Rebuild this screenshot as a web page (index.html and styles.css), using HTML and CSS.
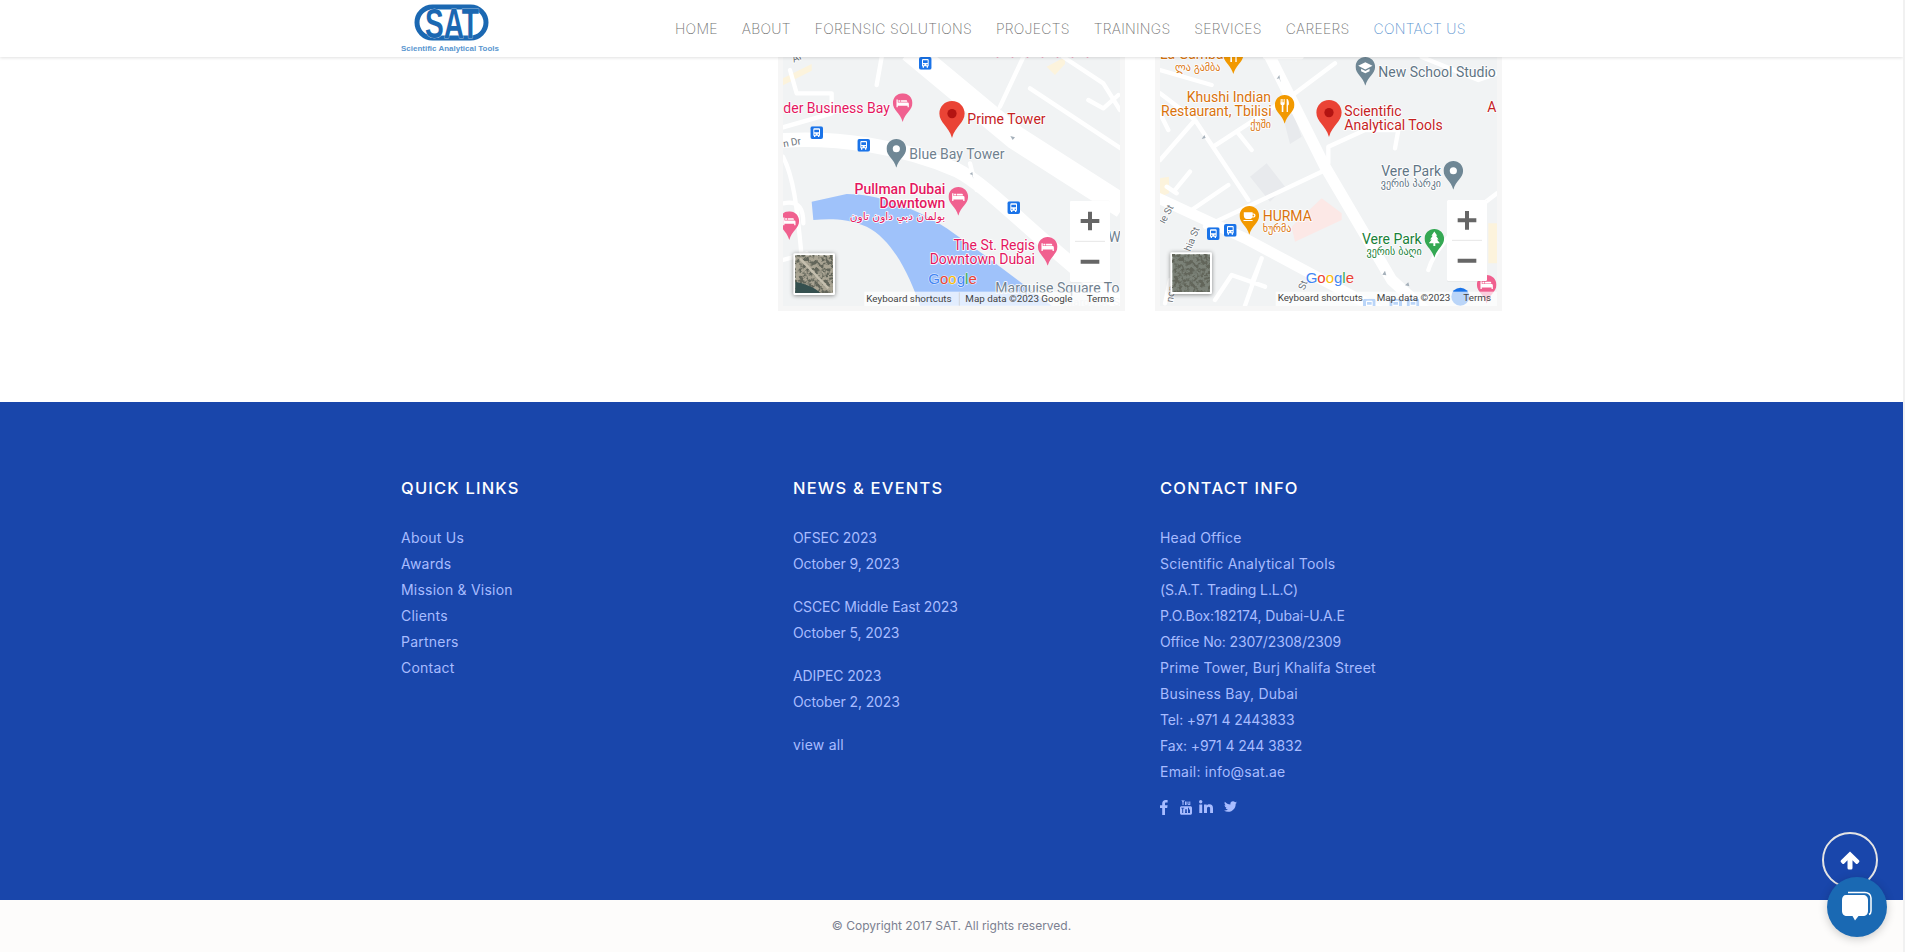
FILE: index.html
```html
<!DOCTYPE html>
<html lang="en">
<head>
<meta charset="utf-8">
<title>SAT - Contact Us</title>
<link rel="stylesheet" href="styles.css">
</head>
<body>
<header class="site-header">
  <a class="logo" href="#">
    <svg width="100" height="57" viewBox="0 0 100 57" aria-label="SAT logo">
      <rect class="logo-ring" x="16" y="7" width="69" height="31" rx="15.500"/>
      <text class="logo-mark" x="24" y="37.500" textLength="54" lengthAdjust="spacingAndGlyphs">SAT</text>
      <text class="logo-name" x="0" y="50.500" textLength="98" lengthAdjust="spacingAndGlyphs">Scientific Analytical Tools</text>
    </svg>
  </a>
  <nav class="main-nav">
    <a href="#">HOME</a>
    <a href="#">ABOUT</a>
    <a href="#">FORENSIC SOLUTIONS</a>
    <a href="#">PROJECTS</a>
    <a href="#">TRAININGS</a>
    <a href="#">SERVICES</a>
    <a href="#">CAREERS</a>
    <a href="#" class="current">CONTACT US</a>
  </nav>
</header>

<main class="maps-section">
  <div class="map-frame">
    <svg class="map" width="337" height="249" viewBox="39 21 1011 747">
      <defs>
        <path id="pin-shape" d="M30 0C13 0 0 13 0 30C0 52 22 60 30 88C38 60 60 52 60 30C60 13 47 0 30 0Z"/>
        <symbol id="pin-bed" viewBox="0 0 60 88"><use href="#pin-shape" fill="currentColor"/><path fill="#fff" d="M11 19h4v9h30a4 4 0 0 1 4 4v11h-4v-5H15v5h-4zM17 21h6v5h-6zM25 21h16a3 3 0 0 1 3 3v2H25z"/></symbol>
        <symbol id="pin-dot" viewBox="0 0 60 88"><use href="#pin-shape" fill="currentColor"/><circle cx="30" cy="30" r="11" fill="#fff"/></symbol>
        <symbol id="pin-red" viewBox="0 0 60 88"><use href="#pin-shape" fill="#ea4335"/><circle cx="30" cy="30" r="11" fill="#b31412"/></symbol>
        <symbol id="pin-fork" viewBox="0 0 60 88"><use href="#pin-shape" fill="currentColor"/><path fill="#fff" d="M19 12h3v10h2V12h3v10h2V12h2v14c0 3-2 5-4 5v21h-5V31c-2 0-4-2-4-5zM38 12c4 0 6 6 6 16 0 3-2 4-3 4v20h-4V12z" transform="translate(-1 0)"/></symbol>
        <symbol id="pin-cup" viewBox="0 0 60 88"><use href="#pin-shape" fill="currentColor"/><path fill="#fff" d="M13 19h27v4h3a5 5 0 0 1 0 12h-4c-2 4-5 5-8 5h-9c-5 0-9-5-9-11zM40 26v6h2a3 3 0 0 0 0-6zM12 43h28v3H12z"/></symbol>
        <symbol id="pin-tree" viewBox="0 0 60 88"><use href="#pin-shape" fill="currentColor"/><path fill="#fff" d="M30 8l9 13h-4l8 11h-5l9 12H33v8h-6v-8H13l9-12h-5l8-11h-4z"/></symbol>
        <symbol id="pin-school" viewBox="0 0 60 88"><use href="#pin-shape" fill="currentColor"/><path fill="#fff" d="M30 16l22 11-22 11L8 27zM17 36l13 7 13-7v8l-13 6-13-6z"/></symbol>
        <symbol id="bus" viewBox="0 0 38 38"><rect width="38" height="38" rx="6" fill="#1a73e8"/><path fill="#fff" d="M9 9a3 3 0 0 1 3-3h14a3 3 0 0 1 3 3v19h-2v4h-4v-4H15v4h-4v-4H9zM12 10v8h14v-8zM12 22v3h4v-3zM22 22v3h4v-3z"/></symbol>
        <filter id="sat-noise" x="0" y="0" width="100%" height="100%">
          <feTurbulence type="fractalNoise" baseFrequency=".09" numOctaves="3" seed="4"/>
          <feColorMatrix values="0 0 0 0 .12  0 0 0 0 .13  0 0 0 0 .1  5 0 0 0 -2.100"/>
          <feComposite in2="SourceGraphic" operator="over"/>
        </filter>
      </defs>
      <rect class="land" x="39" y="21" width="1011" height="747"/>
      <path class="patch" d="M39 85L125 42V62L39 106ZM830 50L885 21V42L855 75Z"/>
      <path class="road" stroke-width="72" d="M420 0L735 262L1060 470"/>
      <path class="road" stroke-width="44" d="M30 272C200 260 400 290 560 360C660 410 800 570 1060 770"/>
      <path class="street" d="M320 105L335 21M60 60L80 130H185V190L39 232M39 320C70 380 80 460 95 620M780 115L1060 300M760 21L690 170M955 150L1000 175L1045 135M880 21L1000 100L1050 180M600 340L620 420M1000 415L1060 470M39 630L110 610M40 460C90 450 100 480 100 520"/>
      <path class="water" d="M125 455L230 432C320 432 430 470 530 535L650 620L845 767H450C420 680 370 570 290 530C230 505 180 505 130 510Z"/>
      <path class="arrow" d="M735 262l-14-4 7 12zM607 366l-8 6 8 3 3 12z"/>
      <path class="top-marks" d="M680 21H975"/>
      <g class="label-pink">
        <text x="40" y="188">der Business Bay</text>
        <text x="795" y="599" class="end">The St. Regis</text>
        <text x="795" y="641" class="end">Downtown Dubai</text>
      </g>
      <g class="label-pink strong">
        <text x="526" y="431" class="end">Pullman Dubai</text>
        <text x="526" y="473" class="end">Downtown</text>
      </g>
      <text class="label-arabic end" x="526" y="510">بولمان دبي داون تاون</text>
      <text class="label-red" x="592" y="221">Prime Tower</text>
      <text class="label-grey" x="418" y="326">Blue Bay Tower</text>
      <text class="label-grey" x="676" y="730">Marquise Square To</text>
      <text class="label-ghost" x="880" y="768">Marquise Sq</text>
      <text class="label-grey" x="1015" y="575">We</text>
      <text class="label-road" x="40" y="290" transform="rotate(-10 50 285)">n Dr</text>
      <text class="label-road" x="68" y="36" transform="rotate(-25 75 30)">Al</text>
      <use href="#bus" x="447" y="21" width="38" height="38"/>
      <use href="#bus" x="121" y="229" width="38" height="38"/>
      <use href="#bus" x="262" y="267" width="38" height="38"/>
      <use href="#bus" x="712" y="454" width="38" height="38"/>
      <use href="#pin-bed" class="pin-pink" x="368" y="130" width="60" height="86"/>
      <use href="#pin-dot" class="pin-slate" x="349" y="267" width="60" height="86"/>
      <use href="#pin-bed" class="pin-pink" x="535" y="411" width="60" height="86"/>
      <use href="#pin-bed" class="pin-pink" x="28" y="484" width="60" height="86"/>
      <use href="#pin-bed" class="pin-pink" x="803" y="561" width="60" height="86"/>
      <use href="#pin-red" x="507" y="153" width="78" height="111"/>
      <text class="google" x="475" y="703"><tspan class="g-b">G</tspan><tspan class="g-r">o</tspan><tspan class="g-y">o</tspan><tspan class="g-b">g</tspan><tspan class="g-g">l</tspan><tspan class="g-r">e</tspan></text>
      <rect class="thumb-frame" x="70" y="610" width="125" height="125" rx="4"/>
      <rect class="thumb-a" x="76" y="616" width="113" height="113"/>
      <path class="thumb-road" d="M90 625L175 715"/>
      <path class="thumb-water" d="M76 729V695C100 700 135 710 150 729Z"/>
      <rect class="attrib" x="283" y="725" width="767" height="43"/>
      <path class="attrib-sep" d="M568 727V767"/>
      <text class="attrib-text" x="289" y="755">Keyboard shortcuts</text>
      <text class="attrib-text" x="586" y="755">Map data ©2023 Google</text>
      <text class="attrib-text" x="950" y="755">Terms</text>
      <rect class="ctrl" x="900" y="452" width="120" height="244" rx="4"/>
      <path class="ctrl-sep" d="M915 574H1005"/>
      <path class="ctrl-icon" d="M960 485V541M932 513H988M932 635H988"/>
    </svg>
  </div>

  <div class="map-frame">
    <svg class="map" width="337" height="249" viewBox="45 21 1011 747">
      <rect class="land" x="45" y="21" width="1011" height="747"/>
      <path class="patch" d="M45 385L72 380V430L45 440ZM1030 520H1056V640H1030Z"/>
      <path class="blush" d="M440 530L530 445L590 490V510L450 575Z"/>
      <path class="bldg" d="M315 380L365 340L420 410L375 455ZM415 205L445 190L470 260L435 282Z"/>
      <path class="road" stroke-width="34" d="M370 10L540 350L740 690L850 790"/>
      <path class="road" stroke-width="32" d="M30 440L300 565L720 790"/>
      <path class="street" d="M45 60L200 105M45 130L150 210L310 450M45 330L150 210M205 290L450 130L570 40M180 530L530 365M550 340V290L660 240L760 240L750 295M280 250L320 300M90 420L135 365M65 410L95 430M140 480L250 405M830 21L1000 90L1056 70M850 660C870 590 960 500 1056 430M210 750L260 675L360 710M320 700L350 625L300 767M45 190L70 240M60 760L75 690M360 21L470 21"/>
      <path class="arrow" d="M403 75l-8 12 8-2 4 13zM178 255l-8 12 12-3zM720 662l-8 12 12 2zM790 697l-10 9 13 3z"/>
      <text class="label-orange" x="45" y="28">La Gamba</text>
      <text class="label-orange-small" x="90" y="64">ლა გამბა</text>
      <text class="label-slate" x="700" y="80">New School Studio</text>
      <text class="label-orange end" x="378" y="155">Khushi Indian</text>
      <text class="label-orange end" x="380" y="197">Restaurant, Tbilisi</text>
      <text class="label-orange-small end" x="378" y="235">ქუში</text>
      <text class="label-red" x="598" y="197">Scientific</text>
      <text class="label-red" x="598" y="239">Analytical Tools</text>
      <text class="label-red" x="1027" y="185">A</text>
      <text class="label-slate end" x="888" y="377">Vere Park</text>
      <text class="label-slate-small end" x="888" y="412">ვერის პარკი</text>
      <text class="label-orange" x="353" y="512">HURMA</text>
      <text class="label-orange-small" x="353" y="545">ხურმა</text>
      <text class="label-green end" x="830" y="582">Vere Park</text>
      <text class="label-green-small end" x="830" y="615">ვერის ბაღი</text>
      <text class="label-road" x="48" y="515" transform="rotate(-62 60 510)">le St</text>
      <text class="label-road" x="105" y="600" transform="rotate(-68 125 580)">hia St</text>
      <text class="label-road" x="462" y="722" transform="rotate(-70 470 710)">St</text>
      <text class="label-road" x="55" y="765" transform="rotate(-80 65 745)">non</text>
      <use href="#bus" x="186" y="532" width="38" height="38"/>
      <use href="#bus" x="237" y="522" width="38" height="38"/>
      <use href="#bus" x="654" y="746" width="38" height="38"/>
      <use href="#bus" x="733" y="746" width="38" height="38"/>
      <use href="#bus" x="785" y="746" width="38" height="38"/>
      <circle class="bus-disc" cx="946" cy="740" r="27"/>
      <use href="#pin-fork" class="pin-orange" x="235" y="-16" width="60" height="88"/>
      <use href="#pin-fork" class="pin-orange" x="389" y="135" width="60" height="86"/>
      <use href="#pin-school" class="pin-slate" x="631" y="21" width="60" height="86"/>
      <use href="#pin-dot" class="pin-slate" x="895" y="333" width="60" height="86"/>
      <use href="#pin-cup" class="pin-orange" x="283" y="468" width="60" height="86"/>
      <use href="#pin-tree" class="pin-green" x="838" y="537" width="60" height="86"/>
      <use href="#pin-bed" class="pin-pink" x="995" y="675" width="60" height="86"/>
      <use href="#pin-red" x="513" y="150" width="78" height="111"/>
      <text class="google" x="482" y="700"><tspan class="g-b">G</tspan><tspan class="g-r">o</tspan><tspan class="g-y">o</tspan><tspan class="g-b">g</tspan><tspan class="g-g">l</tspan><tspan class="g-r">e</tspan></text>
      <rect class="thumb-frame" x="76" y="607" width="125" height="125" rx="4"/>
      <rect class="thumb-b" x="82" y="613" width="113" height="113"/>
      <rect class="attrib" x="392" y="725" width="664" height="43"/>
      <text class="attrib-text" x="398" y="752">Keyboard shortcuts</text>
      <text class="attrib-text" x="695" y="752">Map data ©2023</text>
      <text class="attrib-text" x="955" y="752">Terms</text>
      <rect class="ctrl" x="906" y="450" width="120" height="243" rx="4"/>
      <path class="ctrl-sep" d="M921 571H1011"/>
      <path class="ctrl-icon" d="M966 483V539M938 511H994M938 632H994"/>
    </svg>
  </div>
</main>

<footer class="site-footer">
  <div class="footer-cols">
    <section class="col col-links">
      <h4>QUICK LINKS</h4>
      <ul>
        <li><a href="#">About Us</a></li>
        <li><a href="#">Awards</a></li>
        <li><a href="#">Mission &amp; Vision</a></li>
        <li><a href="#">Clients</a></li>
        <li><a href="#">Partners</a></li>
        <li><a href="#">Contact</a></li>
      </ul>
    </section>
    <section class="col col-news">
      <h4>NEWS &amp; EVENTS</h4>
      <div class="news-item"><a class="num" href="#">OFSEC 2023</a><br><span class="num">October 9, 2023</span></div>
      <div class="news-item"><a class="num" href="#">CSCEC Middle East 2023</a><br><span class="num">October 5, 2023</span></div>
      <div class="news-item"><a class="num" href="#">ADIPEC 2023</a><br><span class="num">October 2, 2023</span></div>
      <a class="view-all" href="#">view all</a>
    </section>
    <section class="col col-contact">
      <h4>CONTACT INFO</h4>
      <ul>
        <li>Head Office</li>
        <li>Scientific Analytical Tools</li>
        <li class="num">(S.A.T. Trading L.L.C)</li>
        <li class="num">P.O.Box:182174, Dubai-U.A.E</li>
        <li class="num">Office No: 2307/2308/2309</li>
        <li>Prime Tower, Burj Khalifa Street</li>
        <li>Business Bay, Dubai</li>
        <li class="num">Tel: +971 4 2443833</li>
        <li class="num">Fax: +971 4 244 3832</li>
        <li>Email: info@sat.ae</li>
      </ul>
      <div class="social">
        <a href="#" aria-label="Facebook"><svg width="8" height="15" viewBox="0 0 8 15"><path d="M7.600 0H5.600C3.600 0 2.200 1.400 2.200 3.500V5.200H0V7.900H2.200V15H5V7.900H7.200L7.600 5.200H5V3.700C5 3 5.300 2.600 6 2.600H7.600Z"/></svg></a>
        <a class="yt" href="#" aria-label="YouTube"><svg width="12" height="15" viewBox="0 0 12 15"><path d="M1.500 0l1 2.600V5h1V2.600L4.600 0h-1L3 1.700 2.500 0zM5 1.600h1.600V5H5zM7.500 1.500h1v2.600h.8V1.500h1V5h-1v-.3l-.8.3c-.7 0-1-.3-1-.9z"/><path fill-rule="evenodd" d="M1.600 6.200h8.800c.9 0 1.600.7 1.600 1.600v5.200c0 1-.7 1.800-1.600 1.800H1.600C.7 14.800 0 14 0 13V7.800c0-.9.7-1.600 1.600-1.600zM1.200 7.800v.8h1V13h1V8.600h1v-.8zM5 9.200V13h2V9.200H6.200v3H5.800v-3zM8 7.800V13h2v-3.500H9V7.800z"/></svg></a>
        <a class="li" href="#" aria-label="LinkedIn"><svg width="14" height="13" viewBox="0 0 14 13"><circle cx="1.700" cy="1.700" r="1.700"/><path d="M.3 4.400h2.900V13H.3zM5 4.400h2.700v1.200C8.300 4.600 9.300 4.200 10.400 4.200 12.800 4.200 14 5.600 14 8.200V13h-2.900V8.600c0-1.200-.5-1.900-1.500-1.900S8 7.500 8 8.600V13H5z"/></svg></a>
        <a href="#" aria-label="Twitter"><svg width="13" height="13" viewBox="0 0 24 24"><path d="M23.953 4.570a10 10 0 01-2.825.775 4.958 4.958 0 002.163-2.723c-.951.555-2.005.959-3.127 1.184a4.920 4.920 0 00-8.384 4.482C7.690 8.095 4.067 6.130 1.640 3.162a4.822 4.822 0 00-.666 2.475c0 1.710.870 3.213 2.188 4.096a4.904 4.904 0 01-2.228-.616v.060a4.923 4.923 0 003.946 4.827 4.996 4.996 0 01-2.212.085 4.936 4.936 0 004.604 3.417 9.867 9.867 0 01-6.102 2.105c-.390 0-.779-.023-1.170-.067a13.995 13.995 0 007.557 2.209c9.053 0 13.998-7.496 13.998-13.985 0-.210 0-.420-.015-.630A9.935 9.935 0 0024 4.590z"/></svg></a>
      </div>
    </section>
  </div>
</footer>
<div class="copyright">© Copyright 2017 SAT. All rights reserved.</div>

<a class="to-top" href="#" aria-label="Back to top">
  <svg width="20" height="20" viewBox="0 0 20 20"><path d="M10 1.500L19 10.300a1.500 1.500 0 0 1 0 2L17.800 13.500a1.500 1.500 0 0 1-2.100 0L12.500 10.200V18a1.500 1.500 0 0 1-1.500 1.500H9A1.500 1.500 0 0 1 7.500 18V10.200L4.300 13.500a1.500 1.500 0 0 1-2.100 0L1 12.300a1.500 1.500 0 0 1 0-2Z"/></svg>
</a>
<a class="chat" href="#" aria-label="Chat">
  <svg width="32" height="32" viewBox="0 0 32 32">
    <path class="chat-back" d="M7 1.500H24C27 1.500 30 3.500 30 7V20C30 22 29.300 23 28 23.500"/>
    <path d="M5 4H22C25 4 27 6 27 9V20C27 23 25 25 22 25H17.500L14 29.500L11.500 25H6C3 25 1 23 1 20V9C1 6 2.500 4 5 4Z"/>
  </svg>
</a>
</body>
</html>
```

FILE: styles.css
```css
* { box-sizing: border-box; }
html, body { margin: 0; padding: 0; }
body {
  width: 1905px;
  height: 952px;
  overflow: hidden;
  border-right: 2px solid #f1f1f1;
  background: #fff;
  font-family: Inter, "Open Sans", sans-serif;
}
a { color: inherit; text-decoration: none; }

.site-header {
  position: relative;
  z-index: 5;
  display: flex;
  align-items: center;
  height: 57px;
  padding-left: 401px;
  background: #fff;
  box-shadow: 0 1px 3px rgba(0, 0, 0, .12);
}
.logo { display: block; width: 274px; height: 57px; }
.logo svg { display: block; }
.logo-ring { fill: #fff; stroke: #1b68b2; stroke-width: 5; }
.logo-mark {
  font-family: "Liberation Sans", sans-serif;
  font-weight: 700;
  font-size: 43px;
  fill: #1b68b2;
  stroke: #fff;
  stroke-width: .6px;
  paint-order: stroke;
}
.logo-name {
  font-family: "Liberation Sans", sans-serif;
  font-weight: 700;
  font-size: 8px;
  fill: #5a96cf;
}
.main-nav {
  display: flex;
  gap: 24px;
  font-size: 14px;
  font-weight: 200;
  letter-spacing: .26px;
  color: #6f6f6f;
}
.main-nav .current { color: #5a93cf; }

.maps-section {
  display: flex;
  gap: 30px;
  height: 345px;
  padding-left: 778px;
}
.map-frame {
  width: 347px;
  height: 254px;
  padding: 0 5px 5px;
  background: #f6f6f6;
}
.map { display: block; font-family: Roboto, sans-serif; }
.land { fill: #f1f3f4; }
.patch { fill: #fcf3dc; }
.blush { fill: #fce8e6; }
.bldg { fill: #e8eaed; }
.road { fill: none; stroke: #fff; stroke-linejoin: round; }
.street { fill: none; stroke: #fff; stroke-width: 13; stroke-linecap: round; stroke-linejoin: round; }
.water { fill: #9fc2fa; }
.arrow { fill: #a5b0ba; }
.bus-disc { fill: #1a73e8; }
.top-marks { stroke: #e4175f; stroke-width: 3; stroke-dasharray: 5 40; opacity: .6; }

.map text {
  font-size: 42px;
  stroke: #fff;
  stroke-width: 5px;
  paint-order: stroke;
  stroke-linejoin: round;
}
.map .end { text-anchor: end; }
.label-pink text, .map .label-arabic { fill: #e4175f; }
.label-pink.strong text { font-weight: 500; }
.map .label-arabic {
  font-family: "DejaVu Sans", sans-serif;
  font-size: 32px;
}
.map .label-orange-small,
.map .label-slate-small,
.map .label-green-small {
  font-family: "DejaVu Sans", sans-serif;
  font-size: 30px;
}
.map .label-red { fill: #c5221f; }
.map .label-grey { fill: #70818f; }
.map .label-slate, .map .label-slate-small { fill: #5f7585; }
.map .label-ghost { fill: #dfe2e5; stroke: none; font-size: 34px; }
.map .label-orange, .map .label-orange-small { fill: #d9730d; }
.map .label-green, .map .label-green-small { fill: #188038; }
.map .label-road { fill: #6b7279; font-size: 30px; }
.pin-pink { color: #f0608f; }
.pin-slate { color: #6f8795; }
.pin-orange { color: #f29900; }
.pin-green { color: #34a853; }

.map .google {
  font-family: "Liberation Sans", sans-serif;
  font-size: 45px;
  stroke-width: 3px;
  stroke: rgba(255, 255, 255, .8);
}
.g-b { fill: #4285f4; }
.g-r { fill: #ea4335; }
.g-y { fill: #fbbc05; }
.g-g { fill: #34a853; }

.thumb-frame { fill: #fff; filter: drop-shadow(0 2px 6px rgba(0, 0, 0, .45)); }
.thumb-a { fill: #a9a493; filter: url(#sat-noise); }
.thumb-b { fill: #7b8278; filter: url(#sat-noise); }
.thumb-water { fill: #35504f; }
.thumb-road { stroke: #c5bfae; stroke-width: 7; fill: none; }

.attrib { fill: rgba(255, 255, 255, .7); }
.attrib-sep { stroke: #c8c8c8; stroke-width: 2; }
.map .attrib-text { font-size: 29.500px; fill: #444; stroke: none; }

.ctrl { fill: #fff; filter: drop-shadow(0 1px 2px rgba(0, 0, 0, .1)); }
.ctrl-sep { stroke: #e6e6e6; stroke-width: 3; }
.ctrl-icon { fill: none; stroke: #666; stroke-width: 12; }

.site-footer {
  height: 498px;
  padding: 73px 0 0 401px;
  background: #1946ab;
  color: #a8bcff;
  font-size: 14px;
  font-weight: 400;
  letter-spacing: .22px;
  line-height: 26px;
}
.num { letter-spacing: -.12px; }
.footer-cols {
  display: grid;
  grid-template-columns: 392px 367px 300px;
}
.col h4 {
  margin: 0 0 24px;
  font-size: 16.500px;
  font-weight: 450;
  line-height: 26px;
  letter-spacing: 1.200px;
  color: #fff;
}
.col ul { margin: 0; padding: 0; list-style: none; }
.news-item { margin-bottom: 17px; }
.view-all { display: block; }
.social {
  display: flex;
  align-items: center;
  gap: 12px;
  height: 15px;
  margin-top: 15px;
}
.social a { display: block; height: 15px; }
.social .yt { margin-right: -5px; }
.social .li { margin-right: -1px; }
.social svg { display: block; fill: #a8bcff; }

.copyright {
  height: 52px;
  background: #fdfcfb;
  color: #7b8090;
  font-size: 12px;
  line-height: 52px;
  text-align: center;
}

.to-top {
  position: fixed;
  left: 1822px;
  top: 832px;
  display: flex;
  align-items: center;
  justify-content: center;
  width: 56px;
  height: 56px;
  border: 2px solid #e4e4e4;
  border-radius: 50%;
}
.to-top svg { fill: #fff; }
.chat {
  position: fixed;
  left: 1827px;
  top: 877px;
  display: flex;
  align-items: center;
  justify-content: center;
  width: 60px;
  height: 60px;
  border-radius: 50%;
  background: #1a69b3;
  box-shadow: 0 2px 10px rgba(0, 0, 0, .2);
}
.chat svg { fill: #fff; }
.chat-back { fill: none; stroke: #fff; stroke-width: 1.500; }
```
